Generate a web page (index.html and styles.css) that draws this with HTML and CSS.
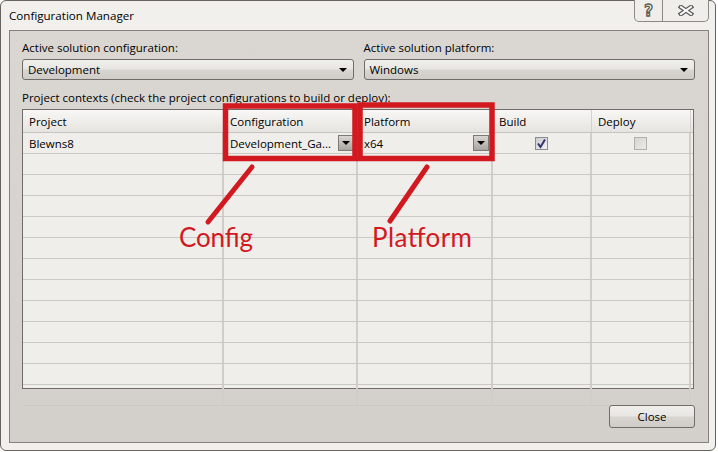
FILE: index.html
```html
<!DOCTYPE html>
<html lang="en">
<head>
    <meta charset="UTF-8">
    <title>Configuration Manager</title>
    <link rel="stylesheet" href="styles.css">
</head>
<body>
    <div class="window">
        <!-- title bar -->
        <div class="titlebar">
            <span class="title">Configuration Manager</span>
            <div class="caption-buttons">
                <span class="cap-btn help">?</span>
                <span class="cap-btn close-x">
                    <svg width="16" height="11" viewBox="0 0 16 11">
                        <path d="M3 2 L13 9 M13 2 L3 9" stroke="#5e5b58" stroke-width="4.5" stroke-linecap="square"/>
                        <path d="M3 2 L13 9 M13 2 L3 9" stroke="#fafafa" stroke-width="2" stroke-linecap="square"/>
                    </svg>
                </span>
            </div>
        </div>

        <div class="client">
            <div class="combos">
                <div class="field">
                    <div class="label">Active solution configuration:</div>
                    <div class="combo"><span>Development</span><span class="combo-arrow"></span></div>
                </div>
                <div class="field">
                    <div class="label">Active solution platform:</div>
                    <div class="combo"><span>Windows</span><span class="combo-arrow"></span></div>
                </div>
            </div>

            <div class="label grid-label">Project contexts (check the project configurations to build or deploy):</div>

            <div class="grid">
                <div class="row head">
                    <div class="cell">Project</div>
                    <div class="cell">Configuration</div>
                    <div class="cell">Platform</div>
                    <div class="cell">Build</div>
                    <div class="cell">Deploy</div>
                    <div class="cell filler"></div>
                </div>
                <div class="row">
                    <div class="cell">Blewns8</div>
                    <div class="cell dd"><span>Development_Ga...</span><span class="dd-btn"></span></div>
                    <div class="cell dd"><span>x64</span><span class="dd-btn"></span></div>
                    <div class="cell center">
                        <span class="check">
                            <svg width="11" height="11" viewBox="0 0 11 11"><path d="M2 5.5 L4.5 9 L9 1.5" fill="none" stroke="#33336e" stroke-width="2"/></svg>
                        </span>
                    </div>
                    <div class="cell center"><span class="check off"></span></div>
                    <div class="cell filler"></div>
                </div>
                <div class="row"><div class="cell"></div><div class="cell"></div><div class="cell"></div><div class="cell"></div><div class="cell"></div><div class="cell filler"></div></div>
                <div class="row"><div class="cell"></div><div class="cell"></div><div class="cell"></div><div class="cell"></div><div class="cell"></div><div class="cell filler"></div></div>
                <div class="row"><div class="cell"></div><div class="cell"></div><div class="cell"></div><div class="cell"></div><div class="cell"></div><div class="cell filler"></div></div>
                <div class="row"><div class="cell"></div><div class="cell"></div><div class="cell"></div><div class="cell"></div><div class="cell"></div><div class="cell filler"></div></div>
                <div class="row"><div class="cell"></div><div class="cell"></div><div class="cell"></div><div class="cell"></div><div class="cell"></div><div class="cell filler"></div></div>
                <div class="row"><div class="cell"></div><div class="cell"></div><div class="cell"></div><div class="cell"></div><div class="cell"></div><div class="cell filler"></div></div>
                <div class="row"><div class="cell"></div><div class="cell"></div><div class="cell"></div><div class="cell"></div><div class="cell"></div><div class="cell filler"></div></div>
                <div class="row"><div class="cell"></div><div class="cell"></div><div class="cell"></div><div class="cell"></div><div class="cell"></div><div class="cell filler"></div></div>
                <div class="row"><div class="cell"></div><div class="cell"></div><div class="cell"></div><div class="cell"></div><div class="cell"></div><div class="cell filler"></div></div>
                <div class="row"><div class="cell"></div><div class="cell"></div><div class="cell"></div><div class="cell"></div><div class="cell"></div><div class="cell filler"></div></div>
                <div class="row"><div class="cell"></div><div class="cell"></div><div class="cell"></div><div class="cell"></div><div class="cell"></div><div class="cell filler"></div></div>
                <div class="row last"><div class="cell"></div><div class="cell"></div><div class="cell"></div><div class="cell"></div><div class="cell"></div><div class="cell filler"></div></div>
            </div>

            <div class="footer">
                <button class="btn">Close</button>
            </div>
        </div>
    </div>

    <!-- red annotations drawn over the screenshot -->
    <svg class="annotations" width="718" height="452" viewBox="0 0 718 452">
        <g fill="none" stroke="#d2191f" stroke-width="5.5">
            <rect x="225.5" y="106" width="129.5" height="52.5"/>
            <rect x="360" y="105" width="132" height="53.5"/>
        </g>
        <g stroke="#d2191f" stroke-width="5" stroke-linecap="round">
            <line x1="252" y1="167" x2="208" y2="222"/>
            <line x1="427" y1="167" x2="390" y2="221"/>
        </g>
        <g fill="#d2191f" font-family="Lato, sans-serif" font-size="26">
            <text x="179" y="247" textLength="74">Config</text>
            <text x="372" y="247" textLength="100">Platform</text>
        </g>
    </svg>
</body>
</html>
```

FILE: styles.css
```css
body {
    margin: 0;
    padding: 0;
    background: #fff;
    font-family: "Open Sans", sans-serif;
    font-size: 11.5px;
    color: #000;
}

.window {
    position: relative;
    width: 716px;
    height: 451px;
    box-sizing: border-box;
    border: 1px solid #67635f;
    border-radius: 6px;
    background: #f1f0ed;
}

.titlebar {
    height: 29px;
    display: flex;
    justify-content: space-between;
    align-items: flex-start;
    padding-left: 8px;
}
.title {
    line-height: 30px;
    font-size: 11.6px;
}
.caption-buttons {
    display: flex;
    margin-right: 6px;
    margin-top: -1px;
    height: 21px;
    border: 1px solid #8d8a86;
    border-top: none;
    border-radius: 0 0 5px 5px;
    background: #efeeeb;
}
.cap-btn {
    display: flex;
    align-items: center;
    justify-content: center;
    height: 21px;
}
.help {
    width: 27px;
    border-right: 1px solid #8d8a86;
    font-family: "DejaVu Sans", sans-serif;
    font-weight: bold;
    font-size: 15px;
    color: #fafafa;
    -webkit-text-stroke: 1.3px #5e5b58;
}
.close-x {
    width: 45px;
}

.client {
    width: 700px;
    height: 413px;
    margin-left: 8px;
    box-sizing: border-box;
    border: 1px solid #85817d;
    background: linear-gradient(#dad7d2, #d3d0cb);
    padding: 9px 13px 0 12px;
    display: flex;
    flex-direction: column;
}

.label {
    height: 15px;
    line-height: 15px;
    white-space: nowrap;
}

.combos {
    display: flex;
    gap: 10px;
}
.field {
    flex: 1;
}
.combo {
    margin-top: 4px;
    height: 21px;
    box-sizing: border-box;
    border: 1px solid #6f6c69;
    border-radius: 3px;
    background: linear-gradient(#f1efec 0%, #e8e6e2 48%, #d9d6d1 52%, #cfccc7 100%);
    display: flex;
    align-items: center;
    justify-content: space-between;
    padding: 0 6px 0 5px;
}
.combo-arrow {
    width: 0;
    height: 0;
    border-left: 4px solid transparent;
    border-right: 4px solid transparent;
    border-top: 4px solid #000;
}

.grid-label {
    margin-top: 10px;
}

.grid {
    margin-top: 4px;
    margin-right: 1px;
    height: 280px;
    box-sizing: border-box;
    border: 1px solid #6f6c69;
    background: #efeeea;
}
.row {
    display: grid;
    grid-template-columns: 201px 134px 135px 99px 99px 1fr;
    height: 21px;
    box-sizing: border-box;
    border-bottom: 1px solid #cbc9c5;
}
.row.head {
    height: 23px;
    background: linear-gradient(#f8f7f5, #e6e4e0);
    border-bottom: 1px solid #c6c4c0;
}
.cell {
    border-right: 2px solid #d0cec9;
    padding-left: 6px;
    display: flex;
    align-items: center;
    white-space: nowrap;
    overflow: hidden;
}
.head .cell {
    border-right: 1px solid #d4d2ce;
}
.cell.filler {
    border-right: none;
    padding: 0;
}
.cell.center {
    justify-content: center;
    padding: 0;
}

.dd {
    justify-content: space-between;
    padding-right: 2px;
}
.dd-btn {
    width: 16px;
    height: 16px;
    box-sizing: border-box;
    border: 1px solid #7c7975;
    background: linear-gradient(#d9d6d2, #a8a5a1);
    display: flex;
    align-items: center;
    justify-content: center;
}
.dd-btn::after {
    content: "";
    border-left: 4px solid transparent;
    border-right: 4px solid transparent;
    border-top: 4px solid #000;
}

.check {
    width: 13px;
    height: 13px;
    box-sizing: border-box;
    border: 1px solid #8b8c90;
    background: linear-gradient(135deg, #c9c9cf, #f3f3f5);
    display: flex;
    align-items: center;
    justify-content: center;
}
.check.off {
    border-color: #b2b0ad;
    background: linear-gradient(135deg, #d7d5d2, #ecebe8);
}

.footer {
    display: flex;
    justify-content: flex-end;
    margin-top: 16px;
}
.btn {
    width: 86px;
    height: 23px;
    border: 1px solid #6f6c69;
    border-radius: 3px;
    background: linear-gradient(#f1efec 0%, #e8e6e2 48%, #d9d6d1 52%, #cfccc7 100%);
    font-family: "Open Sans", sans-serif;
    font-size: 11.5px;
    color: #000;
    padding: 0;
}

.annotations {
    position: absolute;
    top: 0;
    left: 0;
    pointer-events: none;
}
```
